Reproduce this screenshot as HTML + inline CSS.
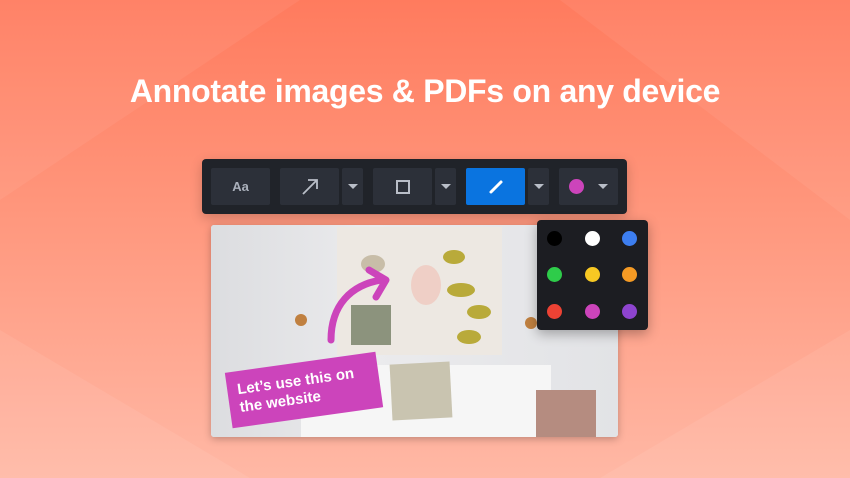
<!DOCTYPE html>
<html><head><style>
*{margin:0;padding:0;box-sizing:border-box}
body{width:850px;height:478px;overflow:hidden;position:relative;font-family:"Liberation Sans",sans-serif;background:linear-gradient(180deg,#ff7b5e 0%,#ff977d 45%,#ffb8a5 100%)}
.h{position:absolute;top:73px;width:850px;text-align:center;color:#fff;font-weight:bold;font-size:32px;letter-spacing:-0.3px}
.tb{position:absolute;left:202px;top:159px;width:425px;height:55px;background:#202329;border-radius:4px;box-shadow:0 4px 12px rgba(0,0,0,.2)}
.b{position:absolute;top:9px;height:37px;background:#2c3039;border-radius:2px;display:flex;align-items:center;justify-content:center;color:#aab0bb}
.tri{width:0;height:0;border-left:5px solid transparent;border-right:5px solid transparent;border-top:5px solid #b9bec8}
.img{position:absolute;left:211px;top:225px;width:407px;height:212px;border-radius:3px;overflow:hidden;background:#e4e5e7;box-shadow:0 2px 8px rgba(0,0,0,.25)}
.pal{position:absolute;left:537px;top:220px;width:111px;height:110px;background:#1c1d22;border-radius:4px;box-shadow:0 4px 12px rgba(0,0,0,.3)}
.d{position:absolute;width:15px;height:15px;border-radius:50%}
</style></head><body>
<svg style="position:absolute;left:0;top:0" width="850" height="478"><polygon points="0,0 300,0 0,200" fill="#fff" opacity=".06"/><polygon points="850,0 560,0 850,220" fill="#fff" opacity=".06"/><polygon points="0,478 0,330 250,478" fill="#fff" opacity=".07"/><polygon points="850,478 850,330 600,478" fill="#fff" opacity=".07"/></svg>
<div class="h">Annotate images &amp; PDFs on any device</div>
<div class="tb">
<div class="b" style="left:9px;width:59px;font-weight:bold;font-size:13px">Aa</div>
<div class="b" style="left:78px;width:59px"><svg width="18" height="18"><path d="M2 16L16 2M7 2H16V11" stroke="#b9bec8" stroke-width="1.8" fill="none"/></svg></div>
<div class="b" style="left:140px;width:21px"><div class="tri"></div></div>
<div class="b" style="left:171px;width:59px"><div style="width:14px;height:14px;border:2px solid #b9bec8"></div></div>
<div class="b" style="left:233px;width:21px"><div class="tri"></div></div>
<div class="b" style="left:264px;width:59px;background:#0a74e0"><svg width="16" height="16"><path d="M3 13L13 3" stroke="#fff" stroke-width="3" stroke-linecap="round"/></svg></div>
<div class="b" style="left:326px;width:21px"><div class="tri"></div></div>
<div class="b" style="left:357px;width:59px;justify-content:space-between;padding:0 10px 0 10px"><div style="width:15px;height:15px;border-radius:50%;background:#cc44bb"></div><div class="tri"></div></div>
</div>
<div class="img">
<div style="position:absolute;left:0;top:0;width:407px;height:212px;background:linear-gradient(90deg,#dcdde0,#ebebed 40%,#e2e3e6)"></div>
<div style="position:absolute;left:126px;top:2px;width:165px;height:128px;background:#ede8e2"></div>
<div style="position:absolute;left:232px;top:25px;width:22px;height:14px;border-radius:50%;background:#b9aa3a"></div>
<div style="position:absolute;left:236px;top:58px;width:28px;height:14px;border-radius:50%;background:#b9aa3a"></div>
<div style="position:absolute;left:256px;top:80px;width:24px;height:14px;border-radius:50%;background:#b9aa3a"></div>
<div style="position:absolute;left:246px;top:105px;width:24px;height:14px;border-radius:50%;background:#b9aa3a"></div>
<div style="position:absolute;left:150px;top:30px;width:24px;height:18px;border-radius:50%;background:#c8bda8"></div>
<div style="position:absolute;left:140px;top:80px;width:40px;height:40px;background:#4b5a3a;opacity:.6"></div>
<div style="position:absolute;left:200px;top:40px;width:30px;height:40px;border-radius:50%;background:#efcfc6"></div>
<div style="position:absolute;left:90px;top:140px;width:250px;height:72px;background:#f6f6f6"></div>
<div style="position:absolute;left:180px;top:138px;width:60px;height:56px;background:#c9c4b0;transform:rotate(-3deg)"></div>
<div style="position:absolute;left:325px;top:165px;width:60px;height:47px;background:#b58c80"></div>
<svg style="position:absolute;left:0;top:0" width="407" height="212"><path d="M120 115C120 80 140 60 170 55" stroke="#cc44bb" stroke-width="7" fill="none" stroke-linecap="round"/><path d="M158 45L175 55L165 72" stroke="#cc44bb" stroke-width="7" fill="none" stroke-linecap="round" stroke-linejoin="round"/><circle cx="90" cy="95" r="6" fill="#c08040"/><circle cx="320" cy="98" r="6" fill="#c08040"/></svg>
</div>
<div style="position:absolute;left:228px;top:362px;width:152px;height:56px;background:#cc44bb;transform:rotate(-8deg);color:#fff;font-weight:bold;font-size:15px;line-height:18px;padding:10px 10px">Let’s use this on<br>the website</div>
<div class="pal">
<div class="d" style="left:10px;top:11px;background:#000"></div><div class="d" style="left:48px;top:11px;background:#fff"></div><div class="d" style="left:85px;top:11px;background:#3d7ef0"></div>
<div class="d" style="left:10px;top:47px;background:#2ecc4a"></div><div class="d" style="left:48px;top:47px;background:#f7c823"></div><div class="d" style="left:85px;top:47px;background:#f59a24"></div>
<div class="d" style="left:10px;top:84px;background:#ec4234"></div><div class="d" style="left:48px;top:84px;background:#cc44bb"></div><div class="d" style="left:85px;top:84px;background:#8e44cf"></div>
</div>
</body></html>
